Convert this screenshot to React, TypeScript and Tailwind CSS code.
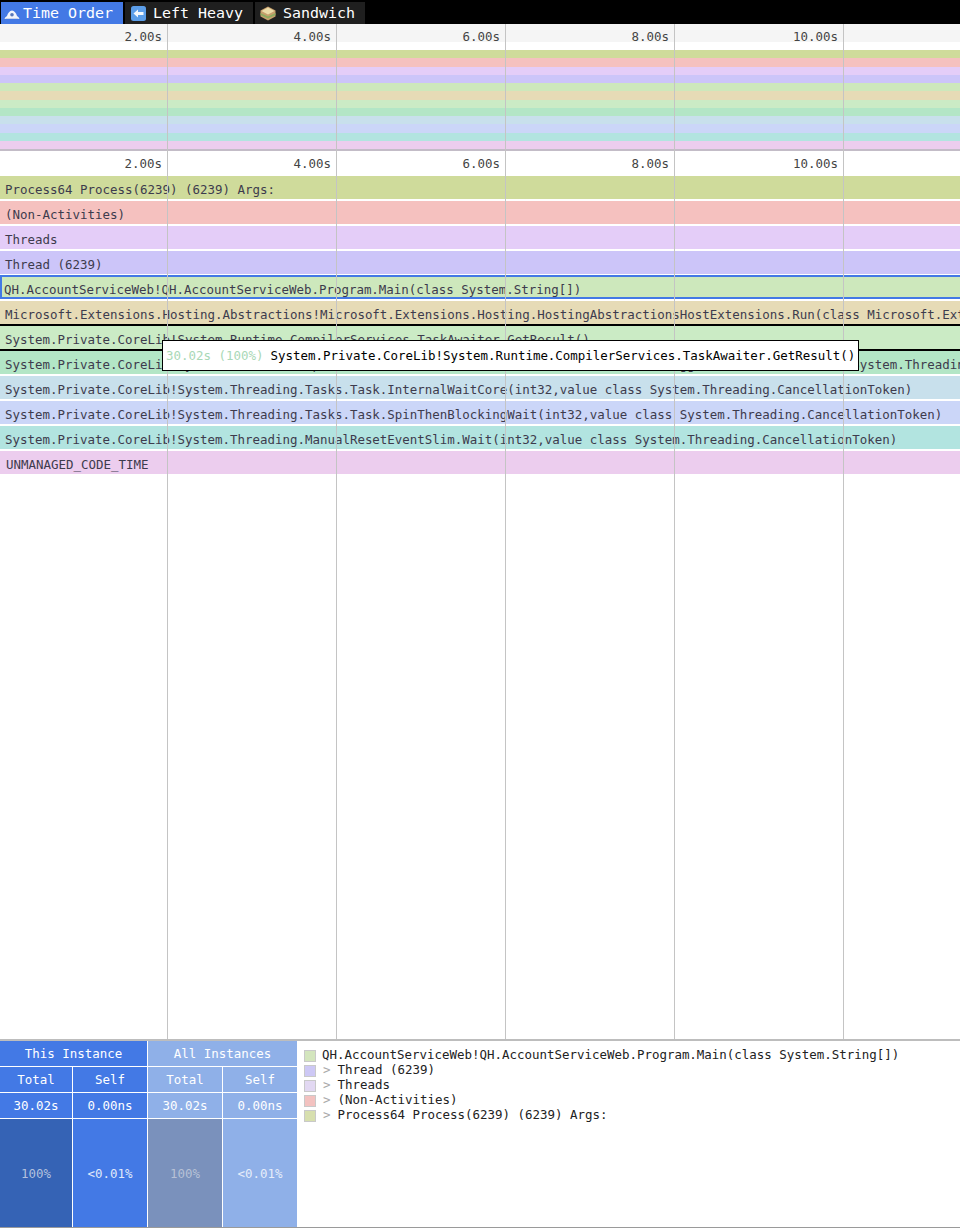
const ticks = ["2.00s", "4.00s", "6.00s", "8.00s", "10.00s"];

const rows = [
  { color: "bg-[#cfdb9b]", text: "Process64 Process(6239) (6239) Args:" },
  { color: "bg-[#f5c1bf]", text: "(Non-Activities)" },
  { color: "bg-[#e4cdf8]", text: "Threads" },
  { color: "bg-[#ccc5f9]", text: "Thread (6239)" },
  {
    color: "bg-[#cde8bc]",
    text: "QH.AccountServiceWeb!QH.AccountServiceWeb.Program.Main(class System.String[])",
    selected: true,
  },
  {
    color: "bg-[#e6dbb6]",
    text: "Microsoft.Extensions.Hosting.Abstractions!Microsoft.Extensions.Hosting.HostingAbstractionsHostExtensions.Run(class Microsoft.Extensions.Hosting.IHost)",
  },
  {
    color: "bg-[#cbebc5]",
    text: "System.Private.CoreLib!System.Runtime.CompilerServices.TaskAwaiter.GetResult()",
    hovered: true,
  },
  {
    color: "bg-[#b3e6c6]",
    text: "System.Private.CoreLib!System.Runtime.CompilerServices.TaskAwaiter.HandleNonSuccessAndDebuggerNotification(class System.Threading.Tasks.Task)",
  },
  {
    color: "bg-[#c8e0ec]",
    text: "System.Private.CoreLib!System.Threading.Tasks.Task.InternalWaitCore(int32,value class System.Threading.CancellationToken)",
  },
  {
    color: "bg-[#cbd6f8]",
    text: "System.Private.CoreLib!System.Threading.Tasks.Task.SpinThenBlockingWait(int32,value class System.Threading.CancellationToken)",
  },
  {
    color: "bg-[#b2e4e0]",
    text: "System.Private.CoreLib!System.Threading.ManualResetEventSlim.Wait(int32,value class System.Threading.CancellationToken)",
  },
  { color: "bg-[#eccdee]", text: "UNMANAGED_CODE_TIME", indent: true },
];

const callers = [
  { color: "bg-[#d3e5bd]", text: "QH.AccountServiceWeb!QH.AccountServiceWeb.Program.Main(class System.String[])", root: true },
  { color: "bg-[#cdc8f5]", text: "Thread (6239)" },
  { color: "bg-[#e2d8f2]", text: "Threads" },
  { color: "bg-[#f3c2c0]", text: "(Non-Activities)" },
  { color: "bg-[#d7dfae]", text: "Process64 Process(6239) (6239) Args:" },
];

const Ruler = ({ className }: { className: string }) => (
  <div className={`flex items-center text-[#444] ${className}`}>
    {ticks.map((t, i) => (
      <div key={t} className={`${i === 0 ? "w-[168px]" : "w-[169px]"} pr-[6px] text-right`}>
        {t}
      </div>
    ))}
  </div>
);

const ClockIcon = () => (
  <svg width="16" height="14" viewBox="0 0 16 14" className="shrink-0">
    <path d="M0.5 13 Q1 10.8 3 10 Q4.5 5 8 4.5 Q11.5 5 13 10 Q15 10.8 15.5 13 Z" fill="#f2f5fb" />
    <circle cx="8" cy="8.8" r="1.8" fill="#5a78b8" />
    <rect x="1.5" y="12" width="13" height="1" fill="#c9d3ea" />
  </svg>
);

const ArrowIcon = () => (
  <svg width="15" height="15" viewBox="0 0 15 15" className="shrink-0">
    <rect x="0" y="0" width="15" height="15" rx="2.5" fill="#5b9de8" />
    <path d="M2.5 7.5 L7 3.5 V6 H12.5 V9 H7 V11.5 Z" fill="#f4f8fd" />
  </svg>
);

const SandwichIcon = () => (
  <svg width="16" height="15" viewBox="0 0 16 15" className="shrink-0">
    <path d="M8 0.5 L15.5 4.5 V10.5 L8 14.5 L0.5 10.5 V4.5 Z" fill="#c79f6c" />
    <path d="M8 1.5 L14.5 5 L8 8.5 L1.5 5 Z" fill="#ecdca8" />
    <path d="M0.5 7 L8 10.5 L15.5 7 V9 L8 12.5 L0.5 9 Z" fill="#8cab5f" />
  </svg>
);

export default function App() {
  return (
    <div className="flex h-[1228px] w-[960px] flex-col overflow-hidden bg-white font-['DejaVu_Sans_Mono',monospace] text-[12.46px]">
      <div className="flex h-6 shrink-0 gap-[2px] bg-black pt-[2px] pl-px text-[14.95px] text-white">
        <div className="flex w-[122px] items-center gap-[3px] bg-[#4379e5] pl-[3px]">
          <ClockIcon />
          <span className="pt-px">Time Order</span>
        </div>
        <div className="flex w-[128px] items-center gap-[7px] bg-[#1f1f1f] pl-[6px]">
          <ArrowIcon />
          <span className="pt-px">Left Heavy</span>
        </div>
        <div className="flex w-[110px] items-center gap-[7px] bg-[#1f1f1f] pl-[5px]">
          <SandwichIcon />
          <span className="pt-px">Sandwich</span>
        </div>
      </div>

      <div className="relative flex-1 overflow-hidden">
        <div className="flex h-[127px] flex-col border-b-2 border-[#c3bcc7]">
          <Ruler className="h-[18px] bg-[#f5f5f5] pt-[9px]" />
          <div className="mt-2 flex flex-1 flex-col">
            {rows.map((r) => (
              <div key={r.text} className={`flex-1 ${r.color}`} />
            ))}
          </div>
        </div>

        <Ruler className="h-[25px] pt-[2px]" />

        <div className="flex flex-col">
          {rows.map((r) => (
            <div key={r.text} className="h-[25px] text-[#3d3b4d]">
              <div
                className={`flex items-center overflow-hidden pt-[6px] whitespace-nowrap ${r.color} ${
                  r.selected
                    ? "-mt-px h-[24px] border-y-2 border-l-2 border-[#4379e5] pl-[2px]"
                    : r.hovered
                      ? "relative -mt-[2px] h-[27px] border-y-2 border-black pl-[5px]"
                      : r.indent
                        ? "h-[23px] pl-[6px]"
                        : "h-[23px] pl-[5px]"
                }`}
              >
                {r.text}
              </div>
            </div>
          ))}
        </div>

        <div className="pointer-events-none absolute inset-0 flex">
          {ticks.map((t, i) => (
            <div key={t} className={`${i === 0 ? "w-[168px]" : "w-[169px]"} border-r border-[#c4c4c4]`} />
          ))}
        </div>

        <div className="absolute top-[316px] left-[162px] flex h-[31px] w-[697px] items-center gap-[7px] border border-black bg-white pt-[2px] pl-[3px] whitespace-nowrap">
          <span className="text-[#a9d8b6]">30.02s (100%)</span>
          <span className="text-black">System.Private.CoreLib!System.Runtime.CompilerServices.TaskAwaiter.GetResult()</span>
        </div>
      </div>

      <div className="flex h-[189px] shrink-0 border-t-2 border-b border-t-[#bdbdbd] border-b-[#9a9a9a]">
        <div className="grid w-[297px] shrink-0 grid-cols-[72px_74px_74px_74px] grid-rows-[25px_25px_25px_108px] gap-px bg-white text-center text-white [&>div]:flex [&>div]:items-center [&>div]:justify-center [&>div]:pt-[2px]">
          <div className="col-span-2 bg-[#4379e5]">This Instance</div>
          <div className="col-span-2 bg-[#8fb0e8]">All Instances</div>
          <div className="bg-[#4379e5]">Total</div>
          <div className="bg-[#4379e5]">Self</div>
          <div className="bg-[#8fb0e8]">Total</div>
          <div className="bg-[#8fb0e8]">Self</div>
          <div className="bg-[#4379e5]">30.02s</div>
          <div className="bg-[#4379e5]">0.00ns</div>
          <div className="bg-[#8fb0e8]">30.02s</div>
          <div className="bg-[#8fb0e8]">0.00ns</div>
          <div className="bg-[#3563b5] text-[#b3c1de]">100%</div>
          <div className="bg-[#4379e5] text-[#e0e9fa]">&lt;0.01%</div>
          <div className="bg-[#7a91bc] text-[#b7c1d6]">100%</div>
          <div className="bg-[#8fb0e8] text-[#e6edfa]">&lt;0.01%</div>
        </div>

        <div className="flex flex-col pt-[7px] pl-[7px] text-[#222]">
          {callers.map((c) => (
            <div key={c.text} className="flex h-[15px] items-center whitespace-nowrap">
              <div className={`h-[12px] w-[12px] shrink-0 border border-[#c9c9c9] ${c.color}`} />
              {c.root ? (
                <span className="ml-[6px]">{c.text}</span>
              ) : (
                <>
                  <span className="ml-[7px] text-[#aaa]">&gt;</span>
                  <span className="ml-[7px]">{c.text}</span>
                </>
              )}
            </div>
          ))}
        </div>
      </div>
    </div>
  );
}
